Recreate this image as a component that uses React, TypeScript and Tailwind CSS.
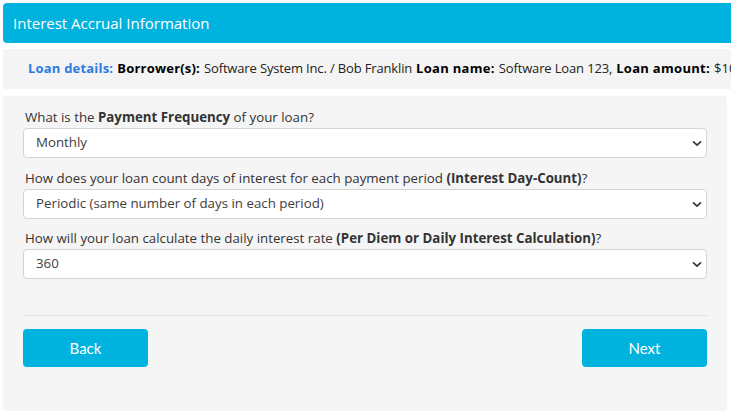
import React from "react";

function Chevron() {
  return (
    <svg width="10" height="7" viewBox="0 0 10 7" className="shrink-0">
      <path d="M1.5 1.8 L5 5.2 L8.5 1.8" fill="none" stroke="#343a40" strokeWidth="1.7" strokeLinecap="round" strokeLinejoin="round" />
    </svg>
  );
}

function Select({ value }: { value: string }) {
  return (
    <div className="flex h-[30px] items-center justify-between rounded-[4px] border border-[#d4d4d4] bg-white pl-3 pr-[4px] text-[13.3px] text-[#404040]">
      <span>{value}</span>
      <Chevron />
    </div>
  );
}

export default function App() {
  return (
    <div
      className="w-[731px] h-[412px] overflow-hidden bg-white pl-[3px] pt-[3px]"
      style={{ fontFamily: '"Open Sans", "Noto Sans", sans-serif' }}
    >
      <div className="flex h-[40px] w-[760px] items-center rounded-l-[4px] bg-[#00b3de] pl-[10px] text-[15px] text-white">
        Interest Accrual Information
      </div>
      <div className="mt-[6px] flex h-[40px] w-[760px] items-center whitespace-nowrap rounded-l-[3px] bg-[#f4f4f4] pl-[25px] text-[13px] text-[#222]">
        <span className="font-bold tracking-[0.2px] text-[#2d7be0]">Loan details:</span>
        <span className="ml-[4px] font-bold tracking-[0.2px] text-black">Borrower(s):</span>
        <span className="ml-[4px] tracking-[-0.15px]">Software System Inc. / Bob Franklin</span>
        <span className="ml-[4px] font-bold tracking-[0.3px] text-black">Loan name:</span>
        <span className="ml-[4px] tracking-[-0.15px]">Software Loan 123,</span>
        <span className="ml-[4px] font-bold tracking-[0.3px] text-black">Loan amount:</span>
        <span className="ml-[4px]">$100,000</span>
      </div>
      <div className="mt-[7px] flex h-[315px] w-[724px] flex-col rounded-[2px] bg-[#f5f5f5] px-5 pt-[12px]">
        <div className="flex h-5 items-center pl-[2px] text-[13.3px] text-[#333]">
          <span>
            What is the <b className="font-bold">Payment Frequency</b> of your loan?
          </span>
        </div>
        <Select value="Monthly" />
        <div className="mt-[11px] flex h-5 items-center pl-[2px] text-[13.3px] text-[#333]">
          <span>
            How does your loan count days of interest for each payment period{" "}
            <b className="font-bold">(Interest Day-Count)</b>?
          </span>
        </div>
        <Select value="Periodic (same number of days in each period)" />
        <div className="mt-[10px] flex h-5 items-center pl-[2px] text-[13.3px] text-[#333]">
          <span>
            How will your loan calculate the daily interest rate{" "}
            <b className="font-bold">(Per Diem or Daily Interest Calculation)</b>?
          </span>
        </div>
        <Select value="360" />
        <div className="mt-[36px] h-px bg-[#dddddd]" />
        <div
          className="mt-[13px] flex justify-between"
          style={{ fontFamily: "Lato, sans-serif" }}
        >
          <button className="h-[38px] w-[125px] rounded-[4px] bg-[#00b3de] text-[15px] text-white">
            Back
          </button>
          <button className="h-[38px] w-[125px] rounded-[4px] bg-[#00b3de] text-[15px] text-white">
            Next
          </button>
        </div>
      </div>
    </div>
  );
}
